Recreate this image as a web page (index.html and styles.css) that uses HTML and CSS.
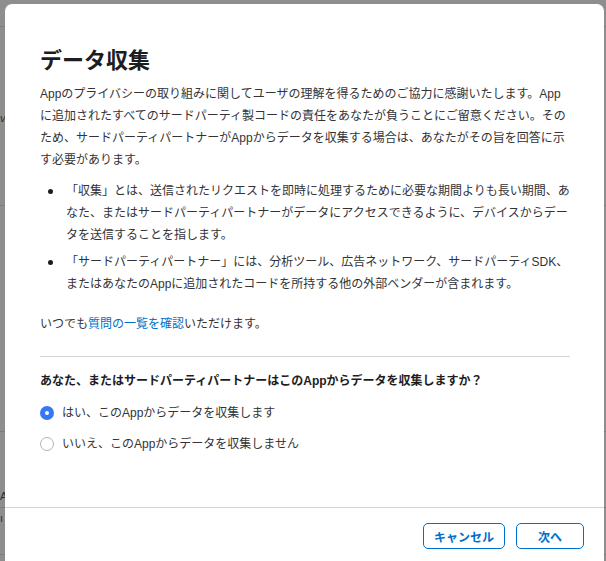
FILE: index.html
```html
<!DOCTYPE html>
<html lang="ja">
<head>
<meta charset="utf-8">
<title>データ収集</title>
<link rel="stylesheet" href="styles.css">
</head>
<body>
<div class="backdrop">
  <div class="bg-line l1"></div>
  <div class="bg-line l2"></div>
  <div class="bg-line l3"></div>
  <div class="bg-line l4"></div>
  <div class="bg-line l5"></div>
  <span class="bg-frag f1">v</span>
  <span class="bg-frag f2">A</span>
  <span class="bg-frag f3">ı</span>
</div>
<div class="modal">
  <div class="modal-body">
    <h1 class="title">データ収集</h1>
    <p class="intro">Appのプライバシーの取り組みに関してユーザの理解を得るためのご協力に感謝いたします。Appに追加されたすべてのサードパーティ製コードの責任をあなたが負うことにご留意ください。そのため、サードパーティパートナーがAppからデータを収集する場合は、あなたがその旨を回答に示す必要があります。</p>
    <ul class="bullets">
      <li>「収集」とは、送信されたリクエストを即時に処理するために必要な期間よりも長い期間、あなた、またはサードパーティパートナーがデータにアクセスできるように、デバイスからデータを送信することを指します。</li>
      <li>「サードパーティパートナー」には、分析ツール、広告ネットワーク、サードパーティSDK、またはあなたのAppに追加されたコードを所持する他の外部ベンダーが含まれます。</li>
    </ul>
    <p class="note">いつでも<a class="link" href="#">質問の一覧を確認</a>いただけます。</p>
    <div class="divider"></div>
    <p class="question">あなた、またはサードパーティパートナーはこのAppからデータを収集しますか？</p>
    <div class="radios">
      <label class="radio-row"><span class="radio checked"></span><span>はい、このAppからデータを収集します</span></label>
      <label class="radio-row"><span class="radio"></span><span>いいえ、このAppからデータを収集しません</span></label>
    </div>
  </div>
  <div class="modal-footer">
    <button class="btn btn-cancel">キャンセル</button>
    <button class="btn btn-next">次へ</button>
  </div>
</div>
</body>
</html>
```

FILE: styles.css
```css
html, body {
  margin: 0;
  padding: 0;
  height: 100%;
  overflow: hidden;
}

body {
  background: #8e8e8e;
  font-family: "Liberation Sans", "Noto Sans CJK JP", sans-serif;
  color: #333336;
  position: relative;
}

.backdrop {
  position: absolute;
  inset: 0;
}

.bg-line {
  position: absolute;
  left: 0;
  width: 100%;
  height: 1px;
  background: #7c7c7c;
}

.l1 { top: 26px; }
.l2 { top: 205px; }
.l3 { top: 431px; }
.l4 { top: 507px; }
.l5 { top: 554px; }

.bg-frag {
  position: absolute;
  left: 0;
  font-size: 11px;
  color: #2e2e2e;
  font-family: "Liberation Sans", sans-serif;
}

.f1 { top: 112px; font-style: italic; }
.f2 { top: 490px; }
.f3 { top: 512px; }

.modal {
  position: relative;
  margin: 4px 2px 0 5px;
  width: 599px;
  background: #ffffff;
  border-radius: 7px 7px 0 0;
  z-index: 1;
}

.modal-body {
  padding: 43px 32px 52px 35px;
}

.title {
  margin: 0;
  font-size: 22px;
  line-height: 28px;
  font-weight: bold;
  color: #1d1d1f;
}

.intro {
  margin: 8px 0 0;
  width: 532px;
  font-size: 12px;
  line-height: 22px;
}

.bullets {
  list-style: none;
  margin: 9px 0 0;
  padding: 0;
  width: 532px;
}

.bullets li {
  position: relative;
  padding-left: 26px;
  font-size: 12px;
  line-height: 22px;
}

.bullets li + li {
  margin-top: 5px;
}

.bullets li::before {
  content: "";
  position: absolute;
  left: 8px;
  top: 9px;
  width: 5px;
  height: 5px;
  border-radius: 50%;
  background: #1d1d1f;
}

.note {
  margin: 18px 0 0;
  font-size: 12px;
  line-height: 22px;
}

.link {
  color: #0070c9;
  text-decoration: none;
}

.divider {
  margin-top: 21px;
  width: 530px;
  height: 1px;
  background: #d6d6d6;
}

.question {
  margin: 13px 0 0;
  font-size: 12px;
  line-height: 22px;
  font-weight: bold;
  color: #1d1d1f;
}

.radios {
  margin-top: 10px;
  display: flex;
  flex-direction: column;
  gap: 9px;
}

.radio-row {
  display: flex;
  align-items: center;
  gap: 8px;
  font-size: 12px;
  line-height: 22px;
  color: #333336;
}

.radio {
  box-sizing: border-box;
  width: 14px;
  height: 14px;
  border-radius: 50%;
  border: 1px solid #b4b4b4;
  background: #ffffff;
  position: relative;
  flex: none;
}

.radio.checked {
  border: none;
  background: #3478f6;
}

.radio.checked::after {
  content: "";
  position: absolute;
  left: 5px;
  top: 5px;
  width: 4px;
  height: 4px;
  border-radius: 50%;
  background: #ffffff;
}

.modal-footer {
  border-top: 1px solid #d2d2d2;
  display: flex;
  justify-content: flex-end;
  gap: 11px;
  padding: 15px 20px 20px;
}

.btn {
  box-sizing: border-box;
  height: 26px;
  border: 1px solid #0070c9;
  border-radius: 5px;
  background: #ffffff;
  color: #0070c9;
  font-family: "Liberation Sans", "Noto Sans CJK JP", sans-serif;
  font-size: 12px;
  font-weight: bold;
  padding: 0;
}

.btn-cancel { width: 82px; }
.btn-next { width: 68px; }
```
